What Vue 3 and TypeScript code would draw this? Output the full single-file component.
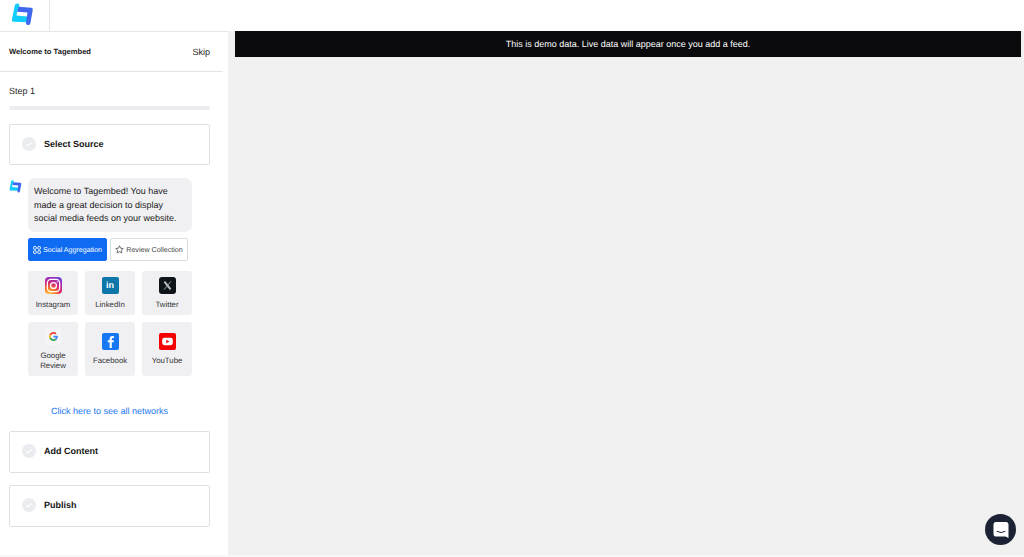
<script setup lang="ts">
interface Tile { name: string; lines: string[]; kind: string }
const rowOne: Tile[] = [
  { name: 'instagram', lines: ['Instagram'], kind: 'ig' },
  { name: 'linkedin', lines: ['LinkedIn'], kind: 'li' },
  { name: 'twitter', lines: ['Twitter'], kind: 'x' },
]
const rowTwo: Tile[] = [
  { name: 'google', lines: ['Google', 'Review'], kind: 'g' },
  { name: 'facebook', lines: ['Facebook'], kind: 'fb' },
  { name: 'youtube', lines: ['YouTube'], kind: 'yt' },
]
</script>

<template>
  <div class="page">
    <header class="topbar">
      <div class="logo-cell">
        <svg class="logo" viewBox="0 0 24 24" width="23" height="23">
          <path d="M4 2.500 Q4.200 .5 6.500 .5 Q9 .6 8.800 2.800 L8.700 4.500 L6.500 9 L5.700 13 L17 14 L16.400 20 L2.500 19.500 Q.5 19.300 1 17 L3.300 5.500 Z" fill="#12cdfb"/>
          <path d="M8 4 L21 5 Q23 5.200 22.700 7.200 L20.200 21 Q19.700 23.500 17.300 23 Q15.300 22.600 15.600 20.500 L17.200 10 L6.500 9 Z" fill="#3f66ee"/>
        </svg>
      </div>
    </header>
    <div class="body">
      <aside class="sidebar">
        <div class="side-head">
          <strong>Welcome to Tagembed</strong>
          <span>Skip</span>
        </div>
        <div class="side-content">
          <div class="step">Step 1</div>
          <div class="progress"></div>
          <div class="card first">
            <svg class="check" viewBox="0 0 14 14" width="14" height="14"><circle cx="7" cy="7" r="7" fill="#ebecf0"/><path d="M4.400 7.200 L6.200 9 L9.700 5.400" fill="none" stroke="#fff" stroke-width="1.100"/></svg>
            <b>Select Source</b>
          </div>
          <div class="chat">
            <svg class="mini" viewBox="0 0 24 24" width="13" height="13">
              <path d="M4 2.500 Q4.200 .5 6.500 .5 Q9 .6 8.800 2.800 L8.700 4.500 L6.500 9 L5.700 13 L17 14 L16.400 20 L2.500 19.500 Q.5 19.300 1 17 L3.300 5.500 Z" fill="#12cdfb"/>
              <path d="M8 4 L21 5 Q23 5.200 22.700 7.200 L20.200 21 Q19.700 23.500 17.300 23 Q15.300 22.600 15.600 20.500 L17.200 10 L6.500 9 Z" fill="#3f66ee"/>
            </svg>
            <div class="chat-col">
              <div class="bubble">Welcome to Tagembed! You have made a great decision to display social media feeds on your website.</div>
              <div class="tabs">
                <div class="tab active">
                  <svg viewBox="0 0 10 10" width="8" height="8" fill="none" stroke="#fff" stroke-width="1.200"><rect x=".7" y=".7" width="3.300" height="3.300" rx=".8"/><rect x="6" y=".7" width="3.300" height="3.300" rx=".8"/><rect x=".7" y="6" width="3.300" height="3.300" rx=".8"/><rect x="6" y="6" width="3.300" height="3.300" rx=".8"/></svg>
                  Social Aggregation
                </div>
                <div class="tab">
                  <svg viewBox="0 0 12 12" width="9" height="9" fill="none" stroke="#444" stroke-width="1"><path d="M6 1 L7.500 4.300 L11 4.700 L8.400 7.100 L9.100 10.700 L6 8.900 L2.900 10.700 L3.600 7.100 L1 4.700 L4.500 4.300 Z" stroke-linejoin="round"/></svg>
                  Review Collection
                </div>
              </div>
              <div class="tile-row short">
                <div v-for="t in rowOne" :key="t.name" class="tile">
                  <span class="ico" :class="t.kind">
                    <svg v-if="t.kind === 'ig'" viewBox="0 0 16 16" width="17" height="17" fill="none" stroke="#fff" stroke-width="1.200"><rect x="2.200" y="2.200" width="11.600" height="11.600" rx="3.400"/><circle cx="8" cy="8" r="2.800"/><circle cx="11.500" cy="4.500" r=".6" fill="#fff" stroke="none"/></svg>
                    <em v-else-if="t.kind === 'li'">in</em>
                    <svg v-else viewBox="0 0 16 16" width="11" height="11" fill="none" stroke="#b9b9bb"><path d="M3.500 2.500 L12.500 13.500" stroke-width="3"/><path d="M13 2 L3 14" stroke-width="1.200"/></svg>
                  </span>
                  <span class="label">{{ t.lines[0] }}</span>
                </div>
              </div>
              <div class="tile-row tall">
                <div v-for="t in rowTwo" :key="t.name" class="tile">
                  <span class="ico" :class="t.kind">
                    <svg v-if="t.kind === 'g'" viewBox="0 0 48 48" width="9" height="9">
                      <path fill="#EA4335" d="M24 9.500c3.500 0 6.700 1.200 9.200 3.600l6.900-6.900C35.900 2.400 30.500 0 24 0 14.600 0 6.500 5.400 2.600 13.200l8 6.200C12.500 13.700 17.800 9.500 24 9.500z"/>
                      <path fill="#4285F4" d="M47 24.500c0-1.600-.1-3.100-.4-4.500H24v9h13c-.6 3-2.300 5.500-4.800 7.200l7.700 6C44.400 37.600 47 31.600 47 24.500z"/>
                      <path fill="#FBBC05" d="M10.600 28.600c-.5-1.400-.8-3-.8-4.600s.3-3.200.8-4.600l-8-6.200C.9 16.500 0 20.100 0 24s.9 7.500 2.600 10.800l8-6.200z"/>
                      <path fill="#34A853" d="M24 48c6.500 0 11.900-2.100 15.900-5.800l-7.700-6c-2.200 1.400-4.900 2.300-8.200 2.300-6.200 0-11.500-4.200-13.400-9.900l-8 6.200C6.500 42.600 14.600 48 24 48z"/>
                    </svg>
                    <svg v-else-if="t.kind === 'fb'" viewBox="0 0 16 16" width="17" height="17"><path d="M9.200 14 V8.800 H10.900 L11.200 6.800 H9.200 V5.600 Q9.200 4.700 10.200 4.700 H11.300 V3 Q10.500 2.800 9.700 2.800 Q7.200 2.800 7.200 5.300 V6.800 H5.400 V8.800 H7.200 V14 Z" fill="#fff"/></svg>
                    <svg v-else viewBox="0 0 16 16" width="17" height="17"><rect x="3" y="4.500" width="10" height="7" rx="2" fill="#fff"/><path d="M6.800 6.300 L9.800 8 L6.800 9.700 Z" fill="#f40000"/></svg>
                  </span>
                  <span class="label">
                    <template v-for="l in t.lines" :key="l">{{ l }}<br /></template>
                  </span>
                </div>
              </div>
            </div>
          </div>
          <div class="all">Click here to see all networks</div>
          <div class="card">
            <svg class="check" viewBox="0 0 14 14" width="14" height="14"><circle cx="7" cy="7" r="7" fill="#ebecf0"/><path d="M4.400 7.200 L6.200 9 L9.700 5.400" fill="none" stroke="#fff" stroke-width="1.100"/></svg>
            <b>Add Content</b>
          </div>
          <div class="card gap">
            <svg class="check" viewBox="0 0 14 14" width="14" height="14"><circle cx="7" cy="7" r="7" fill="#ebecf0"/><path d="M4.400 7.200 L6.200 9 L9.700 5.400" fill="none" stroke="#fff" stroke-width="1.100"/></svg>
            <b>Publish</b>
          </div>
        </div>
      </aside>
      <main class="main">
        <div class="banner">This is demo data. Live data will appear once you add a feed.</div>
      </main>
    </div>
    <div class="launcher">
      <svg viewBox="0 0 18 18" width="18" height="18"><path d="M3.500 1 H14.500 Q16.500 1 16.500 3.500 V17 L13.500 15.500 H3.500 Q1.500 15.500 1.500 13 V3.500 Q1.500 1 3.500 1 Z" fill="#fff"/><path d="M5 10.500 Q9 12.800 13 10.500" fill="none" stroke="#1a2233" stroke-width="1" stroke-linecap="round"/></svg>
    </div>
  </div>
</template>

<style>
html, body { margin: 0; background: #fff; overflow: hidden; }
</style>

<style scoped>
.page {
  width: 1024px;
  height: 557px;
  display: flex;
  flex-direction: column;
  position: relative;
  overflow: hidden;
  font-family: "Liberation Sans", Arial, sans-serif;
  text-rendering: geometricPrecision;
  color: #111;
  background: #fff;
}
.topbar { height: 31px; flex: none; background: #fff; display: flex; box-sizing: border-box; }
.logo-cell {
  width: 50px;
  height: 31px;
  box-sizing: border-box;
  border-right: 1px solid #e6e6e6;
  padding: 3px 0 0 11px;
}
.logo { display: block; }
.body { display: flex; height: 526px; flex: none; border-bottom: 2px solid #f7f7f7; box-sizing: border-box; }
.sidebar { width: 228px; flex: none; box-sizing: border-box; border-top: 1px solid #e6e6e6; }
.side-head {
  box-sizing: border-box;
  width: 223px;
  padding: 0 13px 0 9px;
  display: flex;
  align-items: center;
  justify-content: space-between;
  border-bottom: 1px solid #e4e4e4;
  height: 40px;
}
.side-head strong { font-size: 7.6px; font-weight: 700; color: #1a1a1a; }
.side-head span { font-size: 9px; color: #222; }
.side-content { width: 223px; box-sizing: border-box; padding: 0 13px 0 9px; display: flex; flex-direction: column; }
.step { font-size: 9px; color: #222; margin-top: 13px; line-height: 12px; }
.progress { height: 4px; border-radius: 3px; background: #ebecf0; margin-top: 9px; margin-bottom: 14px; }
.card {
  height: 41.5px;
  box-sizing: border-box;
  border: 1px solid #e0e0e0;
  border-radius: 2px;
  display: flex;
  align-items: center;
  padding: 0 0 1px 12px;
  gap: 8px;
  flex: none;
}
.card.first { height: 41px; }
.card.gap { margin-top: 12.5px; height: 42px; padding-bottom: 2px; }
.card b { font-size: 9px; font-weight: 700; color: #141414; }
.check { flex: none; }
.chat { display: flex; margin-top: 13px; gap: 6px; }
.mini { flex: none; margin-top: 2px; }
.chat-col { width: 164px; flex: none; display: flex; flex-direction: column; }
.bubble {
  background: #f0f0f3;
  border-radius: 7px;
  height: 54px;
  box-sizing: border-box;
  padding: 7px 6px 0;
  font-size: 9px;
  line-height: 13.5px;
  color: #222;
}
.tabs { display: flex; gap: 3px; margin-top: 6px; }
.tab {
  height: 23px;
  box-sizing: border-box;
  border: 1px solid #dcdcdc;
  border-radius: 2px;
  display: flex;
  align-items: center;
  justify-content: center;
  gap: 2px;
  font-size: 7.1px;
  color: #444;
  width: 78px;
  white-space: nowrap;
}
.tab.active { background: #0f6cf2; border-color: #0f6cf2; color: #fff; width: 79px; }
.tile-row { display: flex; gap: 7px; }
.tile-row.short { margin-top: 10px; height: 44px; }
.tile-row.tall { margin-top: 7px; height: 54px; }
.tile {
  width: 50px;
  flex: none;
  background: #f0f0f3;
  border-radius: 3px;
  display: flex;
  flex-direction: column;
  align-items: center;
  justify-content: center;
  gap: 6px;
}
.ico { width: 17px; height: 17px; border-radius: 2px; display: flex; align-items: center; justify-content: center; flex: none; }
.ig { background: radial-gradient(circle at 25% 105%, #fdd05a 0%, #fa7e1e 28%, #d62976 55%, #962fbf 78%, #4f5bd5 100%); border-radius: 4px; }
.li { background: #0e76a8; }
.li em { font: 700 9px "Liberation Sans", Arial, sans-serif; color: #fff; }
.x { background: #0f1419; border-radius: 3px; }
.g { background: #f4f4f6; }
.fb { background: #1877f2; }
.yt { background: #f40000; }
.label { font-size: 7.8px; line-height: 10px; color: #333; text-align: center; }
.all { font-size: 9px; color: #1877f2; text-align: center; margin-top: 29px; margin-bottom: 14px; line-height: 12px; }
.main { flex: 1; background: #f1f1f1; padding: 0 3px 0 7px; }
.banner {
  height: 26px;
  background: #0a0a0c;
  color: #fff;
  font-size: 9px;
  display: flex;
  align-items: center;
  justify-content: center;
}
.launcher {
  position: absolute;
  left: 985px;
  top: 514px;
  width: 31px;
  height: 31px;
  border-radius: 50%;
  background: #1a2233;
  display: flex;
  align-items: center;
  justify-content: center;
}
</style>
